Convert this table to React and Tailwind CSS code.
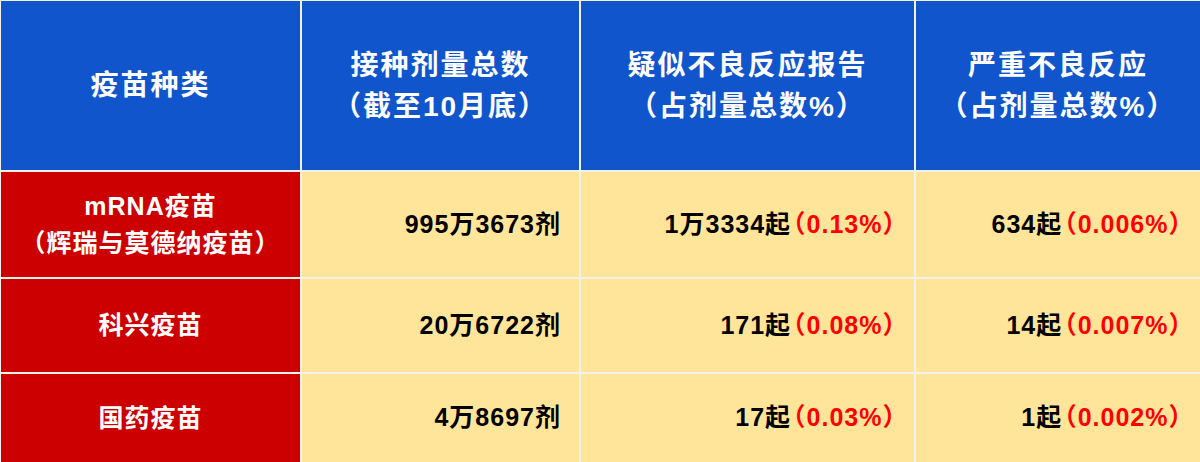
import React from "react";

const rows = [
  { name: ["mRNA疫苗", "（辉瑞与莫德纳疫苗）"], dose: "995万3673剂", sus: "1万3334起", susPct: "（0.13%）", ser: "634起", serPct: "（0.006%）" },
  { name: ["科兴疫苗"], dose: "20万6722剂", sus: "171起", susPct: "（0.08%）", ser: "14起", serPct: "（0.007%）" },
  { name: ["国药疫苗"], dose: "4万8697剂", sus: "17起", susPct: "（0.03%）", ser: "1起", serPct: "（0.002%）" },
];

const Head = ({ lines }) => (
  <div className="bg-[#1155cc] flex flex-col items-center justify-center text-white font-bold text-[28px] leading-[41px] tracking-[2px]">
    {lines.map((l) => (
      <div key={l}>{l}</div>
    ))}
  </div>
);

const Num = ({ main, pct }) => (
  <div className="bg-[#ffe599] flex items-center justify-end pr-[18px] font-bold text-[25px] tracking-[1px] text-black">
    <span>{main}</span>
    {pct && <span className="text-[#ff0000] ml-[2px]">{pct}</span>}
  </div>
);

const App = () => {
  return (
    <div className="w-[1200px] h-[462px] bg-[#f4f1ea] pt-[1px] pl-[1px] grid grid-cols-[299px_277px_333px_1fr] grid-rows-[169px_105px_93px_1fr] gap-[2px] overflow-hidden font-['Liberation_Sans','Noto_Sans_CJK_SC',sans-serif] [font-feature-settings:'halt']">
      <Head lines={["疫苗种类"]} />
      <Head lines={["接种剂量总数", "（截至10月底）"]} />
      <Head lines={["疑似不良反应报告", "（占剂量总数%）"]} />
      <Head lines={["严重不良反应", "（占剂量总数%）"]} />
      {rows.map((r) => (
        <React.Fragment key={r.dose}>
          <div className="bg-[#cc0000] flex flex-col items-center justify-center text-white font-bold text-[25px] leading-[37px] tracking-[1px]">
            {r.name.map((n) => (
              <div key={n}>{n}</div>
            ))}
          </div>
          <Num main={r.dose} />
          <Num main={r.sus} pct={r.susPct} />
          <Num main={r.ser} pct={r.serPct} />
        </React.Fragment>
      ))}
    </div>
  );
};

export default App;
